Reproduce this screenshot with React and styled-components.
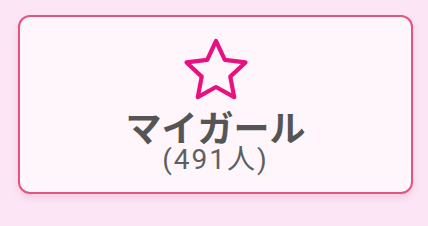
import styled, { createGlobalStyle } from "styled-components";

const GlobalStyle = createGlobalStyle`
  html, body {
    margin: 0;
    padding: 0;
    background: #fce6f5;
  }
  body {
    font-family: "Noto Sans CJK JP", "Noto Sans", sans-serif;
  }
`;

const starPoints = (cx, cy, R, r) => {
  const pts = [];
  for (let i = 0; i < 10; i++) {
    const rad = i % 2 === 0 ? R : r;
    const a = (Math.PI / 5) * i - Math.PI / 2;
    pts.push(`${(cx + rad * Math.cos(a)).toFixed(2)},${(cy + rad * Math.sin(a)).toFixed(2)}`);
  }
  return pts.join(" ");
};

const StarIcon = () => (
  <svg width="68" height="66" viewBox="0 0 68 66">
    <polygon
      points={starPoints(34, 35, 31, 15)}
      fill="none"
      stroke="#e8117f"
      strokeWidth="4.2"
      strokeLinejoin="round"
    />
  </svg>
);

export default function App() {
  return (
    <>
      <GlobalStyle />
      <Page>
        <Card>
          <StarIcon />
          <Title>マイガール</Title>
          <Count>(491人)</Count>
        </Card>
      </Page>
    </>
  );
}

const Page = styled.div`
  width: 428px;
  height: 226px;
  box-sizing: border-box;
  padding: 15px 15px 0 18px;
`;

const Card = styled.div`
  box-sizing: border-box;
  width: 395px;
  height: 179px;
  border: 2.5px solid #e0567f;
  border-radius: 12px;
  background: #fff6fc;
  box-shadow: 0 4px 8px rgba(210, 90, 140, 0.18);
  display: flex;
  flex-direction: column;
  align-items: center;
  padding-top: 20px;
  svg {
    display: block;
  }
`;

const Title = styled.div`
  margin-top: 4px;
  font-size: 36px;
  font-weight: 700;
  line-height: 38px;
  color: #555555;
`;

const Count = styled.div`
  font-family: Roboto, "Noto Sans CJK JP", sans-serif;
  font-size: 28px;
  line-height: 30px;
  letter-spacing: 2px;
  color: #5f5f5f;
`;
